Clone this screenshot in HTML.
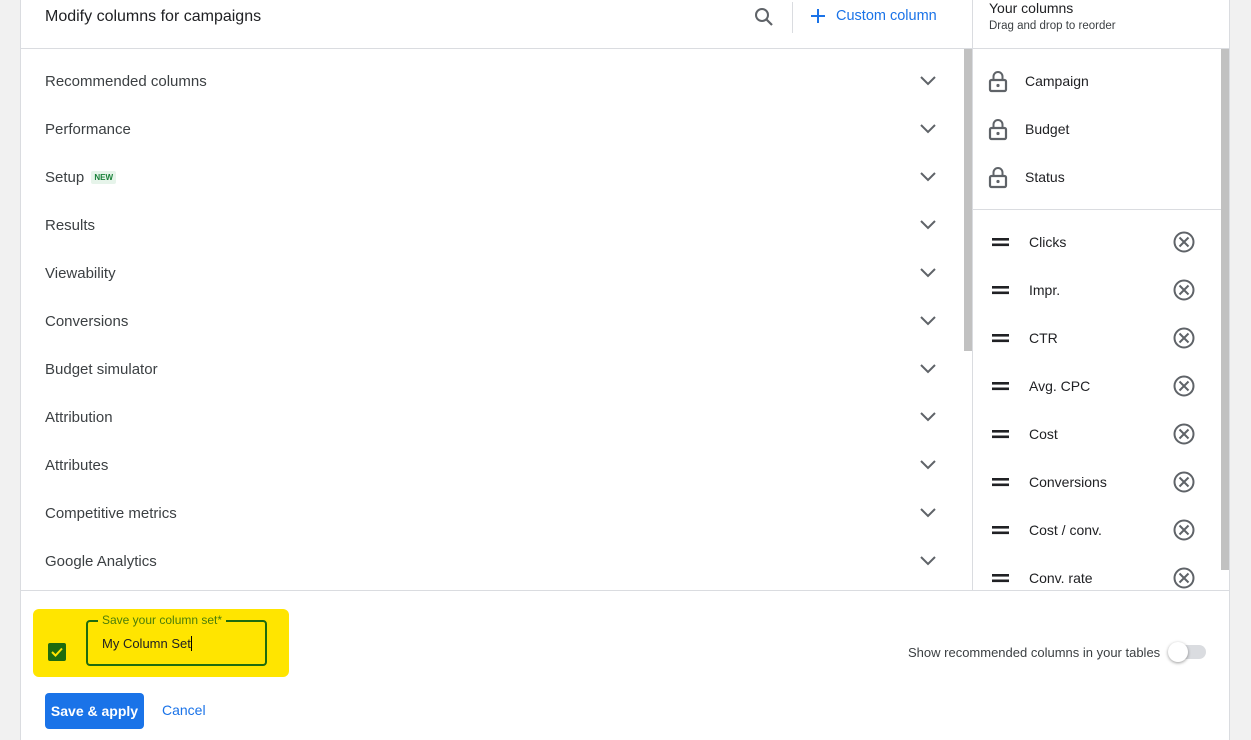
<!DOCTYPE html>
<html><head><meta charset="utf-8"><style>
*{margin:0;padding:0;box-sizing:border-box}
body{width:1251px;height:740px;background:#f1f1f1;font-family:"Liberation Sans",Arial,sans-serif;position:relative;overflow:hidden;color:#3c4043}
.a{position:absolute}
.panel{left:20px;top:0;width:1210px;height:740px;background:#fff;border-left:1px solid #dadce0;border-right:1px solid #dadce0}
.item{position:absolute;left:45px;font-size:15px;color:#3c4043}
.chev{position:absolute;left:918px;width:20px;height:12px}
.rt{position:absolute;left:1025px;font-size:14px;color:#202124}
.rt2{position:absolute;left:1029px;font-size:14px;color:#202124}
</style></head><body>
<div class="a panel"></div>
<div class="a" style="left:45px;top:8px;font-size:16px;color:#202124">Modify columns for campaigns</div>
<svg class="a" style="left:754px;top:7px" width="20" height="20" viewBox="0 0 20 20"><circle cx="8" cy="8" r="6" fill="none" stroke="#5f6368" stroke-width="2"/><path d="M12.5 12.5L18 18" stroke="#5f6368" stroke-width="2.2"/></svg>
<div class="a" style="left:792px;top:2px;width:1px;height:31px;background:#dadce0"></div>
<svg class="a" style="left:811px;top:9px" width="14" height="14"><path d="M7 0V14M0 7H14" stroke="#1a73e8" stroke-width="2"/></svg>
<div class="a" style="left:836px;top:8px;font-size:14.5px;color:#1a73e8">Custom column</div>
<div class="a" style="left:989px;top:0px;font-size:14px;color:#202124">Your columns</div>
<div class="a" style="left:989px;top:20px;font-size:11.5px;color:#3c4043">Drag and drop to reorder</div>
<div class="a" style="left:20px;top:48px;width:1210px;height:1px;background:#dadce0"></div>
<div class="a" style="left:972px;top:0;width:1px;height:590px;background:#dadce0"></div>
<div class="a" style="left:964px;top:49px;width:8px;height:302px;background:#c1c1c1"></div>
<div class="a" style="left:1221px;top:49px;width:8px;height:521px;background:#c1c1c1"></div>
<div class="a" style="left:973px;top:209px;width:248px;height:1px;background:#dadce0"></div>
<div class="a" style="left:20px;top:590px;width:1210px;height:1px;background:#dadce0"></div>

<div class="item" style="top:73px">Recommended columns</div>
<div class="item" style="top:121px">Performance</div>
<div class="item" style="top:169px">Setup <span style="display:inline-block;font-size:8px;font-weight:bold;color:#188038;background:#e6f4ea;padding:2px 3px;border-radius:2px;vertical-align:2px;margin-left:3px">NEW</span></div>
<div class="item" style="top:217px">Results</div>
<div class="item" style="top:265px">Viewability</div>
<div class="item" style="top:313px">Conversions</div>
<div class="item" style="top:361px">Budget simulator</div>
<div class="item" style="top:409px">Attribution</div>
<div class="item" style="top:457px">Attributes</div>
<div class="item" style="top:505px">Competitive metrics</div>
<div class="item" style="top:553px">Google Analytics</div>
<svg class="chev" style="top:75px"><path d="M3 2L10 9L17 2" fill="none" stroke="#5f6368" stroke-width="2"/></svg>
<svg class="chev" style="top:123px"><path d="M3 2L10 9L17 2" fill="none" stroke="#5f6368" stroke-width="2"/></svg>
<svg class="chev" style="top:171px"><path d="M3 2L10 9L17 2" fill="none" stroke="#5f6368" stroke-width="2"/></svg>
<svg class="chev" style="top:219px"><path d="M3 2L10 9L17 2" fill="none" stroke="#5f6368" stroke-width="2"/></svg>
<svg class="chev" style="top:267px"><path d="M3 2L10 9L17 2" fill="none" stroke="#5f6368" stroke-width="2"/></svg>
<svg class="chev" style="top:315px"><path d="M3 2L10 9L17 2" fill="none" stroke="#5f6368" stroke-width="2"/></svg>
<svg class="chev" style="top:363px"><path d="M3 2L10 9L17 2" fill="none" stroke="#5f6368" stroke-width="2"/></svg>
<svg class="chev" style="top:411px"><path d="M3 2L10 9L17 2" fill="none" stroke="#5f6368" stroke-width="2"/></svg>
<svg class="chev" style="top:459px"><path d="M3 2L10 9L17 2" fill="none" stroke="#5f6368" stroke-width="2"/></svg>
<svg class="chev" style="top:507px"><path d="M3 2L10 9L17 2" fill="none" stroke="#5f6368" stroke-width="2"/></svg>
<svg class="chev" style="top:555px"><path d="M3 2L10 9L17 2" fill="none" stroke="#5f6368" stroke-width="2"/></svg>

<svg class="a" style="left:988px;top:70px" width="20" height="24"><path d="M5.5 10V6.5a4.5 4.5 0 0 1 9 0V10" fill="none" stroke="#5f6368" stroke-width="2"/><rect x="2" y="10" width="16" height="11" rx="1.5" fill="none" stroke="#5f6368" stroke-width="2.2"/><circle cx="10" cy="15.5" r="1.6" fill="#5f6368"/></svg>
<svg class="a" style="left:988px;top:118px" width="20" height="24"><path d="M5.5 10V6.5a4.5 4.5 0 0 1 9 0V10" fill="none" stroke="#5f6368" stroke-width="2"/><rect x="2" y="10" width="16" height="11" rx="1.5" fill="none" stroke="#5f6368" stroke-width="2.2"/><circle cx="10" cy="15.5" r="1.6" fill="#5f6368"/></svg>
<svg class="a" style="left:988px;top:166px" width="20" height="24"><path d="M5.5 10V6.5a4.5 4.5 0 0 1 9 0V10" fill="none" stroke="#5f6368" stroke-width="2"/><rect x="2" y="10" width="16" height="11" rx="1.5" fill="none" stroke="#5f6368" stroke-width="2.2"/><circle cx="10" cy="15.5" r="1.6" fill="#5f6368"/></svg>
<div class="rt" style="top:73px">Campaign</div>
<div class="rt" style="top:121px">Budget</div>
<div class="rt" style="top:169px">Status</div>

<div class="rt2" style="top:234px">Clicks</div>
<div class="rt2" style="top:282px">Impr.</div>
<div class="rt2" style="top:330px">CTR</div>
<div class="rt2" style="top:378px">Avg. CPC</div>
<div class="rt2" style="top:426px">Cost</div>
<div class="rt2" style="top:474px">Conversions</div>
<div class="rt2" style="top:522px">Cost / conv.</div>
<div class="rt2" style="top:570px">Conv. rate</div>
<svg class="a" style="left:985px;top:225px" width="215" height="365">
<g id="r"><rect x="7" y="13" width="17" height="2.6" fill="#202124"/><rect x="7" y="18.5" width="17" height="2.6" fill="#202124"/><circle cx="199" cy="17" r="9.5" fill="none" stroke="#5f6368" stroke-width="2"/><path d="M194.5 12.5L203.5 21.5M203.5 12.5L194.5 21.5" stroke="#5f6368" stroke-width="2"/></g>
<use href="#r" y="48"/><use href="#r" y="96"/><use href="#r" y="144"/><use href="#r" y="192"/><use href="#r" y="240"/><use href="#r" y="288"/><use href="#r" y="336"/>
</svg>

<div class="a" style="left:33px;top:609px;width:256px;height:68px;background:#ffe500;border-radius:6px"></div>
<div class="a" style="left:48px;top:643px;width:18px;height:18px;background:#1e6b0e;border-radius:2px"></div>
<svg class="a" style="left:48px;top:643px" width="18" height="18"><path d="M4 9L7.5 12.5L14 5.5" fill="none" stroke="#ffe500" stroke-width="2"/></svg>
<div class="a" style="left:86px;top:620px;width:181px;height:46px;border:2px solid #1e6b0e;border-radius:4px"></div>
<div class="a" style="left:98px;top:613px;font-size:12px;color:#4a7d0a;background:#ffe500;padding:0 4px">Save your column set*</div>
<div class="a" style="left:102px;top:636px;font-size:13px;color:#202124">My Column Set<span style="display:inline-block;width:1px;height:15px;background:#000;vertical-align:-3px"></span></div>
<div class="a" style="left:908px;top:645px;font-size:13px;color:#3c4043">Show recommended columns in your tables</div>
<div class="a" style="left:1170px;top:645px;width:36px;height:14px;border-radius:7px;background:#dadce0"></div>
<div class="a" style="left:1168px;top:642px;width:20px;height:20px;border-radius:50%;background:#fff;box-shadow:0 1px 3px rgba(0,0,0,.4)"></div>
<div class="a" style="left:45px;top:693px;width:99px;height:36px;background:#1a73e8;border-radius:4px;color:#fff;font-size:14px;font-weight:bold;text-align:center;line-height:36px">Save &amp; apply</div>
<div class="a" style="left:162px;top:702px;font-size:14px;color:#1a73e8">Cancel</div>
</body></html>
